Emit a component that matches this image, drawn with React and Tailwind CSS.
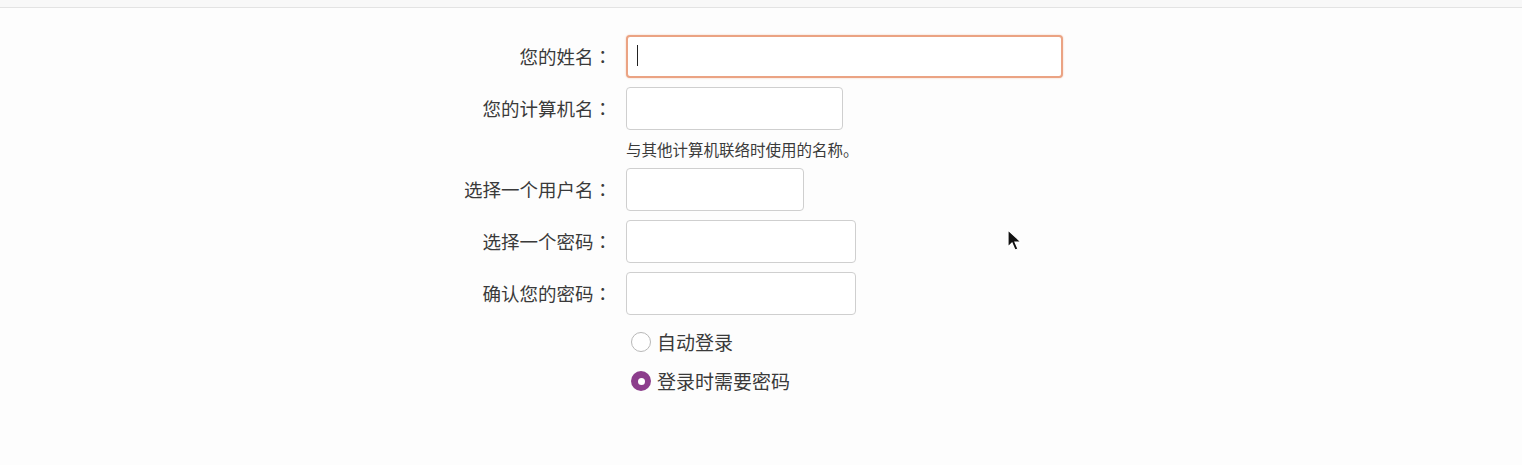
import React from "react";

const font = { fontFamily: '"Noto Sans CJK SC", "Noto Sans", sans-serif' };
const colonFont = { fontFamily: '"Noto Sans CJK TC", "Noto Sans CJK SC", sans-serif' };

function Field({ label, width, focused }) {
  return (
    <>
      <label className="flex items-center justify-end text-[18.5px] text-[#3a3a3a]">
        {label}
        <span style={colonFont}>：</span>
      </label>
      <div
        className={
          "relative h-[43px] rounded-[4px] bg-white " +
          width +
          (focused
            ? " border-2 border-[#eba383] shadow-[0_0_2px_#f3c9b4]"
            : " border border-[#cfcfcf]")
        }
      >
        {focused && <span className="absolute left-[9px] top-[8px] h-[21px] w-px bg-[#222]" />}
      </div>
    </>
  );
}

function Radio({ checked, label }) {
  return (
    <div className="flex h-6 items-center gap-[6px]">
      {checked ? (
        <span className="flex h-[20px] w-[20px] items-center justify-center rounded-full bg-[#8c3d8c]">
          <span className="h-[7px] w-[7px] rounded-full bg-white" />
        </span>
      ) : (
        <span className="h-[20px] w-[20px] rounded-full border border-[#b8b8b8] bg-white" />
      )}
      <span className="text-[19px] text-[#3a3a3a]">{label}</span>
    </div>
  );
}

export default function App() {
  return (
    <div className="relative h-[465px] w-full overflow-hidden bg-[#fdfdfd]" style={font}>
      <div className="h-2 border-b border-[#e3e3e3] bg-[#f8f8f8]" />

      <div className="grid grid-cols-[612px_auto] gap-x-[14px] pt-[27px]">
        <Field label="您的姓名" width="w-[437px]" focused />
        <div className="col-span-2 h-[9px]" />
        <Field label="您的计算机名" width="w-[217px]" />
        <div />
        <p className="py-[9px] text-[15.5px] leading-[20px] text-[#3a3a3a]">与其他计算机联络时使用的名称。</p>
        <Field label="选择一个用户名" width="w-[178px]" />
        <div className="col-span-2 h-[9px]" />
        <Field label="选择一个密码" width="w-[230px]" />
        <div className="col-span-2 h-[9px]" />
        <Field label="确认您的密码" width="w-[230px]" />
        <div />
        <div className="flex flex-col gap-[15px] pl-[5px] pt-[15px]">
          <Radio label="自动登录" />
          <Radio label="登录时需要密码" checked />
        </div>
      </div>

      {/* mouse pointer */}
      <svg className="absolute left-[1007px] top-[229px]" width="16" height="24" viewBox="0 0 16 24">
        <path d="M1 1 L1 18 L5 14 L8 21 L11 20 L8 13 L14 13 Z" fill="#111" stroke="#fff" strokeWidth="1.2" />
      </svg>
    </div>
  );
}
